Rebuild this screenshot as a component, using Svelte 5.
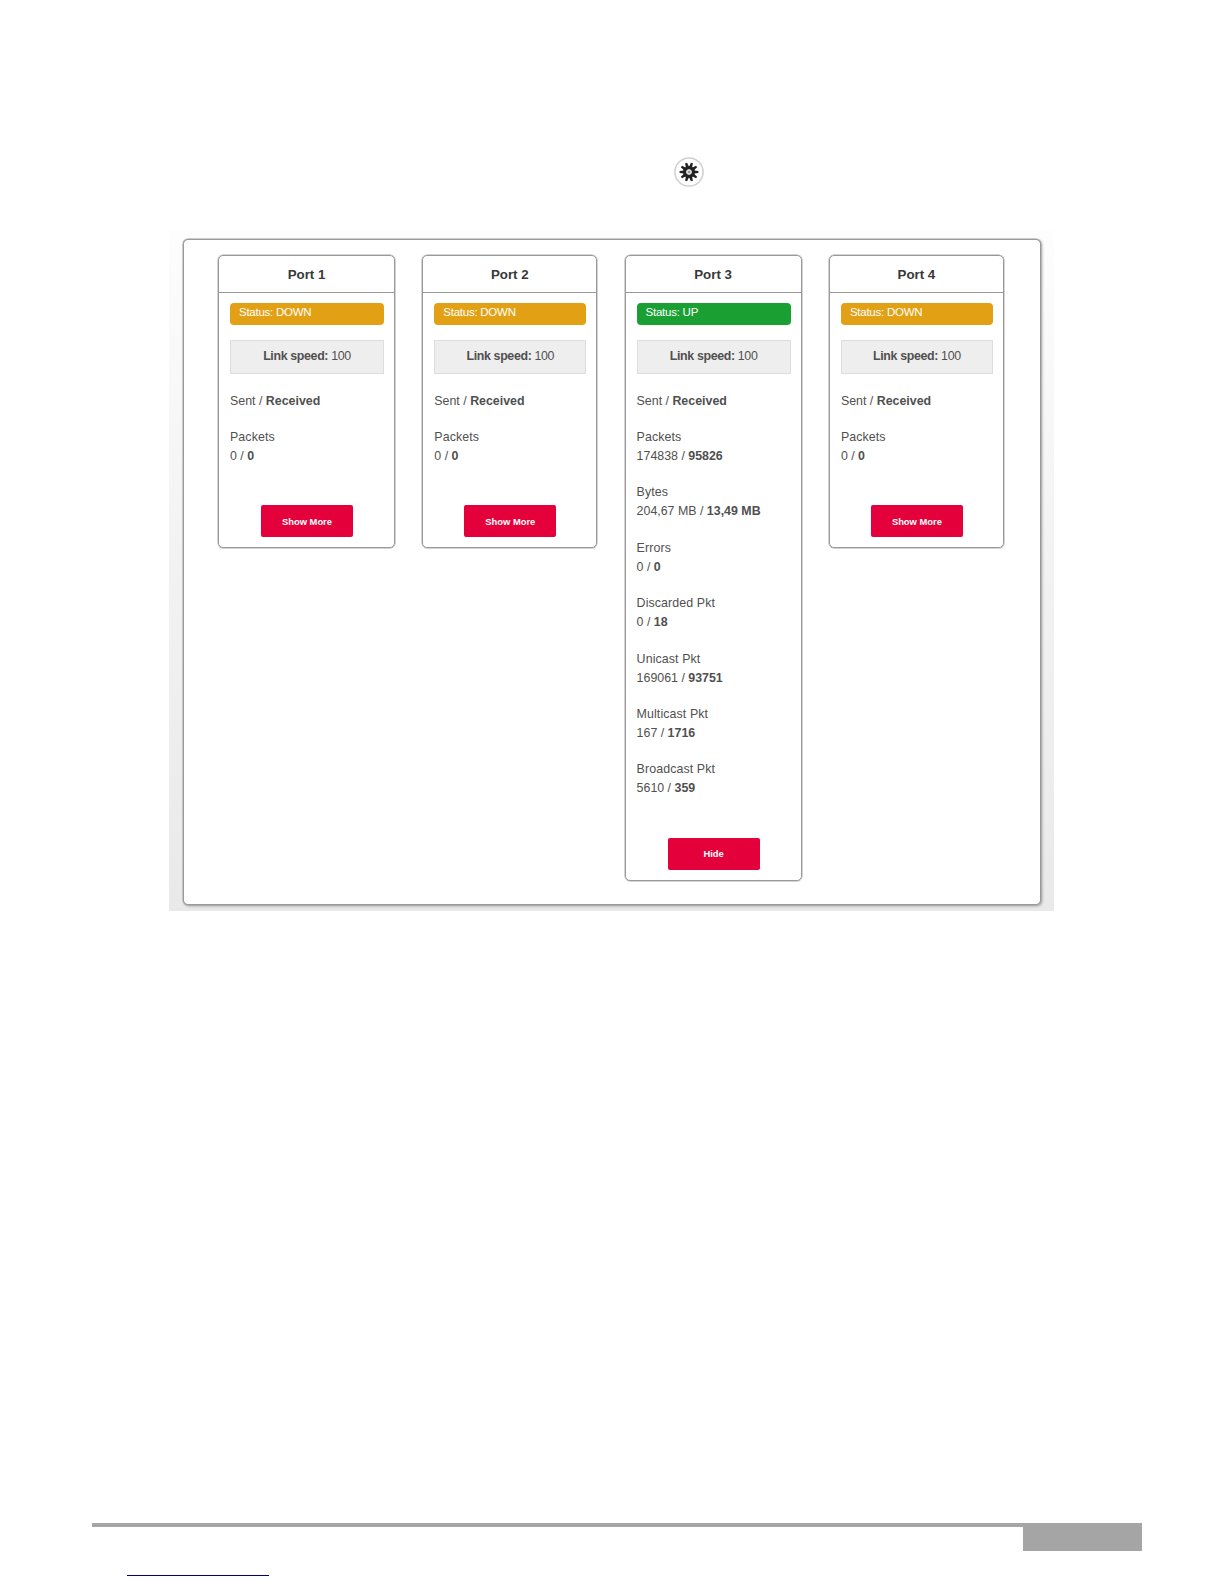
<!-- Port statistics page: one card per port, each can be expanded -->
<script>
  let ports = [
    {
      name: 'Port 1', status: 'DOWN', speed: 100, expanded: false,
      stats: [{ label: 'Packets', sent: '0', received: '0' }]
    },
    {
      name: 'Port 2', status: 'DOWN', speed: 100, expanded: false,
      stats: [{ label: 'Packets', sent: '0', received: '0' }]
    },
    {
      name: 'Port 3', status: 'UP', speed: 100, expanded: true,
      stats: [
        { label: 'Packets', sent: '174838', received: '95826' },
        { label: 'Bytes', sent: '204,67 MB', received: '13,49 MB' },
        { label: 'Errors', sent: '0', received: '0' },
        { label: 'Discarded Pkt', sent: '0', received: '18' },
        { label: 'Unicast Pkt', sent: '169061', received: '93751' },
        { label: 'Multicast Pkt', sent: '167', received: '1716' },
        { label: 'Broadcast Pkt', sent: '5610', received: '359' }
      ]
    },
    {
      name: 'Port 4', status: 'DOWN', speed: 100, expanded: false,
      stats: [{ label: 'Packets', sent: '0', received: '0' }]
    }
  ];

  const teeth = [0, 36, 72, 108, 144, 180, 216, 252, 288, 324];

  function toggle(port) {
    port.expanded = !port.expanded;
    ports = ports;
  }
</script>

<div class="page">
  <div class="toolbar">
    <button class="settings" aria-label="Settings">
      <svg width="32" height="32" viewBox="-16 -16 32 32">
        <circle r="14.1" fill="#fff" stroke="#cfcfcf" stroke-width="1.5" />
        {#each teeth as angle}
          <path d="M-1.6 -5 L-1 -9.4 H1 L1.6 -5 Z" fill="#222" transform="rotate({angle + 18})" />
        {/each}
        <circle r="4.3" fill="none" stroke="#222" stroke-width="3.4" />
        <circle r="2.7" fill="#ddd" />
        <circle r="1.1" fill="#888" />
      </svg>
    </button>
  </div>

  <div class="backdrop">
    <div class="panel">
      {#each ports as port}
        <section class="card">
          <h2>{port.name}</h2>
          <div class="card-body">
            <div class="status" class:up={port.status === 'UP'}>Status: {port.status}</div>
            <div class="speed"><b>Link speed:</b> {port.speed}</div>
            <p class="legend">Sent / <b>Received</b></p>
            <div class="stats">
              {#each port.expanded ? port.stats : port.stats.slice(0, 1) as stat}
                <div class="stat">
                  <div class="label">{stat.label}</div>
                  <div>{stat.sent} / <b>{stat.received}</b></div>
                </div>
              {/each}
            </div>
            <button class="toggle" on:click={() => toggle(port)}>
              {port.expanded ? 'Hide' : 'Show More'}
            </button>
          </div>
        </section>
      {/each}
    </div>
  </div>

  <footer>
    <div class="rule"></div>
    <div class="page-tab"></div>
  </footer>
  <div class="link-line"></div>
</div>

<style>
  :global(body) {
    background: #fff;
  }

  .page {
    box-sizing: border-box;
    width: 1224px;
    height: 1584px;
    padding-top: 156px;
    display: flex;
    flex-direction: column;
    overflow: hidden;
    font-family: "Liberation Sans", Arial, sans-serif;
    font-size: 12.4px;
    line-height: 19px;
    color: #505050;
  }

  .toolbar {
    height: 75px;
    padding-left: 673px;
  }

  .settings {
    display: block;
    padding: 0;
    border: none;
    background: none;
    cursor: pointer;
  }

  .settings svg {
    display: block;
  }

  .backdrop {
    box-sizing: border-box;
    width: 885px;
    height: 680px;
    margin-left: 169px;
    padding: 8px 13px 6px 14px;
    background: linear-gradient(#fdfdfd, #f3f3f3 45%, #e9e9e9);
  }

  .panel {
    box-sizing: border-box;
    height: 666px;
    padding: 15px 0 0 34px;
    display: grid;
    grid-template-columns: 177px 175px 177px 175px;
    column-gap: 27.3px;
    align-items: start;
    border: 1px solid #999;
    border-radius: 5px;
    background: #fff;
    box-shadow: 0 0 0 0.5px #aaa, 1px 1px 3px rgba(0, 0, 0, 0.35);
  }

  .card {
    box-sizing: border-box;
    border: 1px solid #999;
    border-radius: 5px;
    box-shadow: 0 0 0 0.5px #aaa;
  }

  h2 {
    margin: 0;
    height: 36px;
    border-bottom: 1px solid #999;
    font-size: 13.3px;
    line-height: 38px;
    text-align: center;
    color: #383838;
  }

  .card-body {
    padding: 10px 10px;
    padding-left: 11px;
    display: flex;
    flex-direction: column;
  }

  .status {
    height: 22px;
    padding-left: 9px;
    border-radius: 4px;
    background: #e2a114;
    color: #fff;
    font-size: 11.5px;
    letter-spacing: -0.25px;
    line-height: 19px;
  }

  .status.up {
    background: #1a9f33;
  }

  .speed {
    box-sizing: border-box;
    height: 34px;
    margin-top: 15px;
    border: 1px solid #ddd;
    background: #eee;
    letter-spacing: -0.35px;
    line-height: 31px;
    text-align: center;
  }

  .legend {
    margin: 18px 0 17px;
  }

  .stats {
    display: grid;
    row-gap: 17.4px;
  }

  .label {
    letter-spacing: 0.1px;
  }

  .toggle {
    align-self: center;
    width: 92px;
    height: 32px;
    margin-top: 39.4px;
    padding: 0;
    border: none;
    border-radius: 2px;
    background: #e4003a;
    color: #fff;
    font: bold 9.4px "Liberation Sans", Arial, sans-serif;
    cursor: pointer;
  }

  footer {
    margin: 612px 82px 0 92px;
    height: 28px;
    display: flex;
  }

  .rule {
    flex: 1;
    height: 4px;
    background: #a5a5a5;
  }

  .page-tab {
    width: 119px;
    background: #a5a5a5;
  }

  .link-line {
    width: 142px;
    height: 1px;
    margin: 24px 0 0 127px;
    background: #000080;
  }
</style>
